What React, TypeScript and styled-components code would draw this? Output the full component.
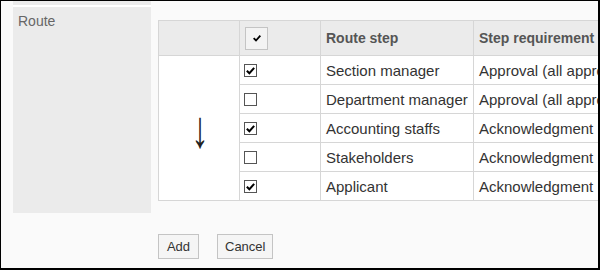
import React from 'react'
import styled, { createGlobalStyle } from 'styled-components'

const GlobalStyle = createGlobalStyle`
  html, body {
    margin: 0;
    padding: 0;
    background: #fff;
  }
  body {
    font-family: "Liberation Sans", Arial, sans-serif;
  }
`

const steps = [
  { name: 'Section manager', requirement: 'Approval (all approvers)', checked: true },
  { name: 'Department manager', requirement: 'Approval (all approvers)', checked: false },
  { name: 'Accounting staffs', requirement: 'Acknowledgment', checked: true },
  { name: 'Stakeholders', requirement: 'Acknowledgment', checked: false },
  { name: 'Applicant', requirement: 'Acknowledgment', checked: true },
]

function CheckMark({ size }: { size: number }) {
  return (
    <svg width={size} height={size} viewBox="0 0 12 12">
      <polyline points="2,6.2 4.8,9 10,3.2" fill="none" stroke="#000" strokeWidth="2.2" />
    </svg>
  )
}

function App() {
  return (
    <Frame>
      <GlobalStyle />
      <PrevLabel />
      <FieldRow>
        <Label>Route</Label>
        <Field>
          <Grid>
            <colgroup>
              <col style={{ width: 81 }} />
              <col style={{ width: 81 }} />
              <col style={{ width: 153 }} />
              <col style={{ width: 200 }} />
            </colgroup>
            <thead>
              <tr>
                <Th />
                <Th $check>
                  <HeadBox type="button">
                    <CheckMark size={10} />
                  </HeadBox>
                </Th>
                <Th>Route step</Th>
                <Th>Step requirement</Th>
              </tr>
            </thead>
            <tbody>
              {steps.map((s, i) => (
                <tr key={s.name}>
                  {i === 0 && (
                    <ArrowCell rowSpan={steps.length}>
                      <Arrow>↓</Arrow>
                    </ArrowCell>
                  )}
                  <Td $check>
                    <Box>{s.checked && <CheckMark size={11} />}</Box>
                  </Td>
                  <Td>{s.name}</Td>
                  <Td>{s.requirement}</Td>
                </tr>
              ))}
            </tbody>
          </Grid>
        </Field>
      </FieldRow>
      <Actions>
        <Button type="button">Add</Button>
        <Button type="button">Cancel</Button>
      </Actions>
    </Frame>
  )
}

export default App

const Frame = styled.div`
  width: 600px;
  height: 270px;
  box-sizing: border-box;
  border: solid #000;
  border-width: 1px 2px 2px 1px;
  background: #fafafa;
  overflow: hidden;
  padding-left: 12px;
`

const PrevLabel = styled.div`
  width: 138px;
  height: 4px;
  background: #ebebeb;
  border-bottom: 2px solid #fff;
`

const FieldRow = styled.div`
  display: flex;
  align-items: flex-start;
`

const Label = styled.div`
  flex: none;
  width: 138px;
  height: 206px;
  box-sizing: border-box;
  padding: 6px 5px;
  background: #ebebeb;
  color: #666;
  font-size: 14px;
  line-height: 16px;
`

const Field = styled.div`
  margin-left: 7px;
  padding-top: 13px;
`

const Grid = styled.table`
  border-collapse: collapse;
  table-layout: fixed;
  width: 515px;
  background: #fff;
  font-size: 15px;
  color: #333;
`

const Th = styled.th<{ $check?: boolean }>`
  height: 34px;
  padding: ${p => (p.$check ? '0 0 0 5px' : '0 5px')};
  border: 1px solid #d6d6d6;
  background: #ebebeb;
  color: #555;
  font-size: 14px;
  font-weight: bold;
  text-align: left;
  white-space: nowrap;
  overflow: hidden;
`

const Td = styled.td<{ $check?: boolean }>`
  height: 28px;
  padding: ${p => (p.$check ? '0 0 0 4px' : '0 5px')};
  border: 1px solid #d6d6d6;
  white-space: nowrap;
  overflow: hidden;
  vertical-align: middle;
`

const ArrowCell = styled.td`
  border: 1px solid #d6d6d6;
  text-align: center;
  vertical-align: middle;
`

const Arrow = styled.span`
  display: inline-block;
  font-size: 35px;
  line-height: 1;
  color: #222;
  transform: translate(1px, 0) scaleY(1.5);
`

const HeadBox = styled.button`
  display: flex;
  align-items: center;
  justify-content: center;
  width: 23px;
  height: 23px;
  padding: 0;
  margin: 0;
  border: 1px solid #c4c4c4;
  background: #f3f3f3;
`

const Box = styled.span`
  display: flex;
  align-items: center;
  justify-content: center;
  width: 13px;
  height: 13px;
  box-sizing: border-box;
  border: 1px solid #555;
  background: #fff;
`

const Actions = styled.div`
  display: flex;
  gap: 18px;
  margin: 21px 0 0 145px;
`

const Button = styled.button`
  min-width: 41px;
  height: 25px;
  padding: 0 7px;
  border: 1px solid #c4c4c4;
  border-radius: 0;
  background: #f5f5f5;
  color: #333;
  font-family: "Liberation Sans", Arial, sans-serif;
  font-size: 13px;
`
